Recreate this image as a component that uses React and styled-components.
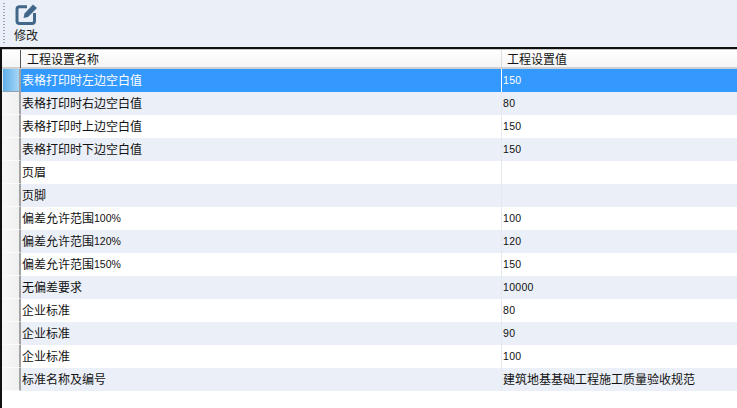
import React from 'react';
import styled, { createGlobalStyle } from 'styled-components';

const GlobalStyle = createGlobalStyle`
  html, body {
    margin: 0;
    padding: 0;
    background: #fff;
  }
`;

const Page = styled.div`
  width: 737px;
  height: 408px;
  overflow: hidden;
  display: flex;
  flex-direction: column;
  font-family: "Noto Sans CJK SC", "Liberation Sans", sans-serif;
  font-size: 12px;
  color: #111;
`;

const Toolbar = styled.div`
  height: 49px;
  flex: none;
  box-sizing: border-box;
  background: #ebeff7;
  border-bottom: 2px solid #111;
  display: flex;
  padding: 2px 0 0 3px;
`;

const Grip = styled.div`
  width: 2px;
  height: 40px;
  margin-top: 1px;
  background: repeating-linear-gradient(to bottom, #9aa3ad 0 1px, transparent 1px 3px);
`;

const ToolButton = styled.div`
  width: 32px;
  margin-left: 5px;
  padding-top: 1px;
  display: flex;
  flex-direction: column;
  align-items: center;
  gap: 2px;
  line-height: 16px;
  font-size: 12px;
  color: #222;
`;

const Grid = styled.div`
  flex: 1;
  border-left: 2px solid #111;
  display: flex;
  flex-direction: column;
`;

const HeaderRow = styled.div`
  height: 20px;
  flex: none;
  box-sizing: border-box;
  display: grid;
  grid-template-columns: 19px 481px 1fr;
  background: linear-gradient(to bottom, #fff 0, #f5f5f6 100%);
  border-top: 1px solid #c9c9c9;
  border-bottom: 2px solid #cfcfcf;
`;

const HeaderCell = styled.div`
  padding-left: ${p => p.$pad}px;
  line-height: 18px;
  border-right: 1px solid ${p => p.$line};
`;

const Row = styled.div`
  height: 23px;
  flex: none;
  display: grid;
  grid-template-columns: 19px 481px 1fr;
  line-height: 21px;
  background: ${p => (p.$selected ? '#3399ff' : p.$odd ? '#ebeff7' : '#fff')};
  color: ${p => (p.$selected ? '#fff' : '#111')};
`;

const RowMarker = styled.div`
  box-sizing: border-box;
  background: ${p => (p.$selected ? 'linear-gradient(to right, #5eaee8, #a6d6f6)' : 'linear-gradient(to right, #f7f7f7, #f0f0f0)')};
  border-right: 2px solid #a3a3a3;
  border-left: ${p => (p.$selected ? '1px solid #efefef' : 'none')};
  border-bottom: 1px solid ${p => (p.$selected ? '#8fa3b5' : '#fbfbfb')};
`;

const NameCell = styled.div`
  padding-left: 1px;
  border-right: 1px solid ${p => (p.$selected ? '#fff' : '#e4e8ef')};
  white-space: nowrap;
`;

const ValueCell = styled.div`
  padding-left: 1px;
  white-space: nowrap;
`;

const Latin = styled.span`
  font-family: "Liberation Sans", sans-serif;
  font-size: 10.5px;
  vertical-align: 1px;
  letter-spacing: ${p => (p.$spaced ? '0.3px' : '0')};
`;

const rows = [
  ['表格打印时左边空白值', '150'],
  ['表格打印时右边空白值', '80'],
  ['表格打印时上边空白值', '150'],
  ['表格打印时下边空白值', '150'],
  ['页眉', ''],
  ['页脚', ''],
  ['偏差允许范围100%', '100'],
  ['偏差允许范围120%', '120'],
  ['偏差允许范围150%', '150'],
  ['无偏差要求', '10000'],
  ['企业标准', '80'],
  ['企业标准', '90'],
  ['企业标准', '100'],
  ['标准名称及编号', '建筑地基基础工程施工质量验收规范'],
];

// digits and % are drawn smaller than the Chinese text in the original
function CellText({ text, spaced }) {
  return text.split(/([0-9%]+)/).map((part, i) =>
    /^[0-9%]+$/.test(part) ? <Latin key={i} $spaced={spaced}>{part}</Latin> : part
  );
}

function EditIcon() {
  return (
    <svg width="24" height="22" viewBox="0 0 24 22" fill="none">
      <path d="M13 3.8H5.5Q3 3.8 3 6.3V18q0 2.5 2.5 2.5h12.5q2.5 0 2.5-2.5V10" stroke="#41688a" strokeWidth="3" />
      <path d="M9.5 15l1-4.5L19 1.5l4 3.5-9 9z" fill="#41688a" />
    </svg>
  );
}

export default function App() {
  return (
    <Page>
      <GlobalStyle />
      <Toolbar>
        <Grip />
        <ToolButton>
          <EditIcon />
          修改
        </ToolButton>
      </Toolbar>
      <Grid>
        <HeaderRow>
          <HeaderCell $pad={0} $line="#555" />
          <HeaderCell $pad={6} $line="#dcdcdc">工程设置名称</HeaderCell>
          <HeaderCell $pad={5} $line="transparent">工程设置值</HeaderCell>
        </HeaderRow>
        {rows.map(([name, value], i) => (
          <Row key={i} $selected={i === 0} $odd={i % 2 === 1}>
            <RowMarker $selected={i === 0} />
            <NameCell $selected={i === 0}><CellText text={name} /></NameCell>
            <ValueCell><CellText text={value} spaced /></ValueCell>
          </Row>
        ))}
      </Grid>
    </Page>
  );
}
